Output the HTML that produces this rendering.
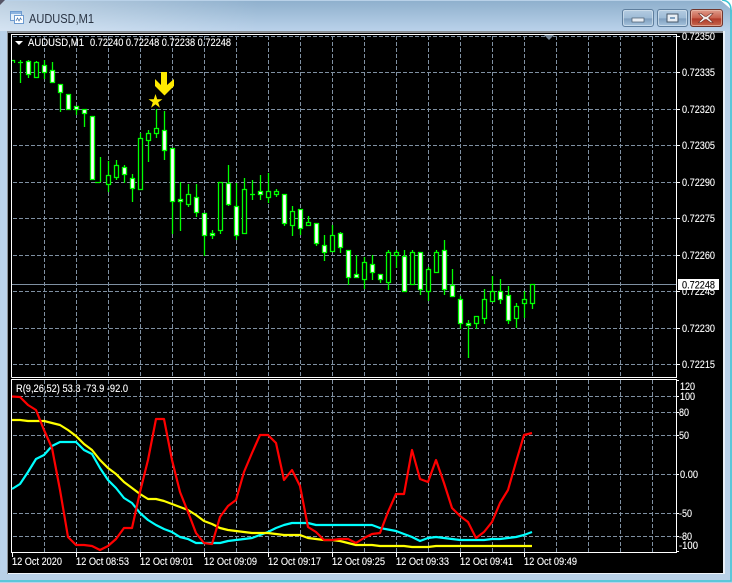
<!DOCTYPE html>
<html><head><meta charset="utf-8"><style>
html,body{margin:0;padding:0;background:#fff}
#w{position:relative;width:732px;height:583px;overflow:hidden;background:#b9d1e8}
svg{position:absolute;left:0;top:0}
text{font-family:"Liberation Sans",sans-serif;font-size:11px;fill:#fff;stroke:#fff;stroke-width:.12}
</style></head><body><div id="w">
<svg width="732" height="583" viewBox="0 0 732 583">
<defs>
<linearGradient id="t" x1="0" y1="0" x2="0" y2="1"><stop offset="0" stop-color="#8fb0cd"/><stop offset="1" stop-color="#bad2ea"/></linearGradient>
<linearGradient id="l" x1="0" y1="0" x2="1" y2="0"><stop offset="0" stop-color="#fff" stop-opacity=".4"/><stop offset="1" stop-color="#fff" stop-opacity="0"/></linearGradient>
<linearGradient id="b1" x1="0" y1="0" x2="0" y2="1"><stop offset="0" stop-color="#b6cde2"/><stop offset=".5" stop-color="#9dbbd6"/><stop offset=".55" stop-color="#7f9fbe"/><stop offset="1" stop-color="#a9c6e0"/></linearGradient>
<linearGradient id="b2" x1="0" y1="0" x2="0" y2="1"><stop offset="0" stop-color="#e0a090"/><stop offset=".5" stop-color="#c8604c"/><stop offset=".55" stop-color="#b03a28"/><stop offset="1" stop-color="#c86a50"/></linearGradient>
</defs>
<rect width="732" height="583" fill="#b9d1e8"/>
<rect x="0" y="1" width="732" height="30" fill="url(#t)"/>
<rect x="0" y="1" width="260" height="30" fill="url(#l)"/>
<path d="M0 0h5L0 5z" fill="#556"/>
<path d="M720 0h12v10z" fill="#fff"/>
<path d="M722 0Q731 1 731 10V581H0" fill="none" stroke="#3cc4d4" stroke-width="1.5"/>
<rect x="1" y="31" width="6" height="541" fill="#bad2ea"/>
<rect x="7" y="31" width="717" height="2" fill="#8a8f94"/>
<rect x="7" y="31" width="2" height="543" fill="#8a8f94"/>
<rect x="8" y="33" width="716" height="540" fill="#000"/>
<rect x="8" y="573" width="716" height="1" fill="#eef4fa"/>
<rect x="723" y="31" width="2" height="543" fill="#e8f0f8"/>

<!-- title -->
<g shape-rendering="crispEdges">
<rect x="10.5" y="11.5" width="11" height="9" fill="#e6f0fa" stroke="#6e9bd0"/>
<rect x="14.5" y="15.5" width="9" height="8" fill="#fff" stroke="#6e9bd0"/>
<rect x="11" y="12" width="10" height="2" fill="#8db4e0"/>
</g>
<path d="M16 21l1.500-3 1.500 3 1.500-3 1 2" fill="none" stroke="#4a78b0" stroke-width=".8"/>
<text x="29" y="23" textLength="65" lengthAdjust="spacingAndGlyphs" style="font-size:12.500px;fill:#2a3444;stroke:none">AUDUSD,M1</text>

<!-- buttons -->
<rect x="622.500" y="9.500" width="31" height="17" rx="2.500" fill="url(#b1)" stroke="#5f7f9e"/>
<rect x="623.500" y="10.500" width="29" height="15" rx="2" fill="none" stroke="#d6e4f0" stroke-opacity=".7"/>
<rect x="632" y="18" width="12" height="4" fill="#e8eef4" stroke="#47586a" stroke-width=".7"/>
<rect x="657.500" y="9.500" width="30" height="17" rx="2.500" fill="url(#b1)" stroke="#5f7f9e"/>
<rect x="658.500" y="10.500" width="28" height="15" rx="2" fill="none" stroke="#d6e4f0" stroke-opacity=".7"/>
<rect x="667" y="14" width="11" height="8" fill="#e8eef4" stroke="#47586a"/>
<rect x="670" y="17" width="5" height="2" fill="#7f9fbe"/>
<rect x="690.500" y="9.500" width="32" height="17" rx="2.500" fill="url(#b2)" stroke="#70362e"/>
<rect x="691.500" y="10.500" width="30" height="15" rx="2" fill="none" stroke="#f0c8b8" stroke-opacity=".6"/>
<path d="M701 13.500l4 3 1.500 0 4-3h2.500l-4.500 4.500 4.500 4.500h-2.500l-4-3h-1.500l-4 3h-2.500l4.500-4.500-4.500-4.500z" fill="#f4f0ee" stroke="#6a3028" stroke-width=".6"/>

<!-- grid -->
<g fill="none" stroke="#7f90a2" shape-rendering="crispEdges">
<path stroke-dasharray="4 2" d="M13 36.500H676M13 72.500H676M13 109.500H676M13 145.500H676M13 182.500H676M13 218.500H676M13 255.500H676M13 291.500H676M13 328.500H676M13 364.500H676"/>
<path stroke-dasharray="4 2" d="M44.500 36V377M76.500 36V377M108.500 36V377M140.500 36V377M172.500 36V377M204.500 36V377M236.500 36V377M268.500 36V377M300.500 36V377M332.500 36V377M364.500 36V377M396.500 36V377M428.500 36V377M460.500 36V377M492.500 36V377M524.500 36V377M556.500 36V377M588.500 36V377M620.500 36V377M652.500 36V377"/>
<path stroke-dasharray="4 2" d="M13 396.500H676M13 412.500H676M13 435.500H676M13 474.500H676M13 513.500H676M13 536.500H676"/>
<path stroke-dasharray="4 2" d="M44.500 380V552M76.500 380V552M108.500 380V552M140.500 380V552M172.500 380V552M204.500 380V552M236.500 380V552M268.500 380V552M300.500 380V552M332.500 380V552M364.500 380V552M396.500 380V552M428.500 380V552M460.500 380V552M492.500 380V552M524.500 380V552M556.500 380V552M588.500 380V552M620.500 380V552M652.500 380V552"/>
<path d="M12 284.500H676"/>
</g>
<path d="M544 35h10l-5 5z" fill="#778899"/>

<!-- frames -->
<g fill="none" stroke="#fff" shape-rendering="crispEdges">
<path d="M11.500 377.500V34.500H676.500V377.500H11.500"/>
<path d="M11.500 379.500H676.500V552.500H11.500z"/>
<path d="M677 36.500h3M677 72.500h3M677 109.500h3M677 145.500h3M677 182.500h3M677 218.500h3M677 255.500h3M677 291.500h3M677 328.500h3M677 364.500h3"/>
<path d="M677 380.500h2M677 396.500h2M677 412.500h2M677 435.500h2M677 474.500h2M677 513.500h2M677 536.500h2M677 551.500h2"/>
<path d="M12.500 553v4M76.500 553v4M140.500 553v4M204.500 553v4M268.500 553v4M332.500 553v4M396.500 553v4M460.500 553v4M524.500 553v4"/>
</g>

<!-- wicks -->
<g fill="none" stroke="#00ff00" stroke-width="1.300">
<path d="M12 60.500h3M14.500 60v3M18 62.500h5M100 182.500h-5M20.500 60V83M28.500 60V78M36.500 61V78M44.500 60V79M52.500 62V82M60.500 84V112M68.500 94V109M76.500 106V115M84.500 109V127M92.500 116V179M100.500 157V182M108.500 161V192M116.500 160V180M124.500 165V183M132.500 174V202M140.500 133V190M148.500 130V162M156.500 109V138M164.500 111V160M172.500 148V234M180.500 182V231M188.500 184V207M196.500 184V217M204.500 213V256M212.500 230V239M220.500 182V234M228.500 165V206M236.500 183V240M244.500 178V233M252.500 180V200M260.500 175V200M268.500 173V203M276.500 189V197M284.500 194V226M292.500 206V236M300.500 209V235M308.500 216V226M316.500 223V246M324.500 235V261M332.500 225V252M340.500 232V253M348.500 250V285M356.500 255V277M364.500 257V289M372.500 255V280M380.500 274V283M388.500 250V290M396.500 250V268M404.500 250V292M412.500 250V285M420.500 252V295M428.500 267V301M436.500 250V272M444.500 240V295M452.500 269V297M460.500 296V329M468.500 320V358M476.500 316V329M484.500 289V324M492.500 276V302M500.500 279V304M508.500 286V324M516.500 303V328M524.500 291V318M532.500 284V309"/>
<path d="M250 194.500h5"/>
<!-- hollow -->
<path fill="#000" d="M34.500 62.500h4v15h-4zM106.500 175.500h4v9h-4zM114.500 165.500h4v12h-4zM138.500 138.500h4v51h-4zM146.500 133.500h4v7h-4zM154.500 128.500h4v5h-4zM186.500 194.500h4v10h-4zM218.500 182.500h4v48h-4zM242.500 189.500h4v44h-4zM266.500 191.500h4v6h-4zM274.500 191.500h4v3h-4zM290.500 211.500h4v14h-4zM306.500 222.500h4v3h-4zM330.500 235.500h4v16h-4zM362.500 262.500h4v17h-4zM386.500 252.500h4v30h-4zM394.500 252.500h4v3h-4zM410.500 252.500h4v32h-4zM426.500 269.500h4v22h-4zM434.500 252.500h4v20h-4zM474.500 316.500h4v7h-4zM482.500 299.500h4v19h-4zM490.500 291.500h4v10h-4zM514.500 306.500h4v12h-4zM522.500 299.500h4v4h-4zM530.500 284.500h4v19h-4z"/>
<!-- filled -->
<path fill="#fff" d="M26.500 61.500h4v13h-4zM42.500 65.500h4v7h-4zM50.500 70.500h4v12h-4zM58.500 84.500h4v8h-4zM66.500 94.500h4v15h-4zM74.500 106.500h4v3h-4zM82.500 109.500h4v4h-4zM90.500 116.500h4v63h-4zM122.500 167.500h4v7h-4zM130.500 178.500h4v10h-4zM162.500 130.500h4v20h-4zM170.500 148.500h4v53h-4zM178.500 199.500h4v2h-4zM194.500 197.500h4v15h-4zM202.500 213.500h4v22h-4zM210.500 233.500h4v2h-4zM226.500 183.500h4v21h-4zM234.500 206.500h4v29h-4zM258.500 191.500h4v3h-4zM282.500 194.500h4v29h-4zM298.500 209.500h4v19h-4zM314.500 223.500h4v20h-4zM322.500 245.500h4v7h-4zM338.500 233.500h4v14h-4zM346.500 250.500h4v27h-4zM354.500 274.500h4v3h-4zM370.500 264.500h4v8h-4zM378.500 274.500h4v5h-4zM402.500 256.500h4v35h-4zM418.500 252.500h4v37h-4zM442.500 250.500h4v39h-4zM450.500 285.500h4v11h-4zM458.500 299.500h4v24h-4zM466.500 323.500h4v2h-4zM498.500 291.500h4v8h-4zM506.500 295.500h4v25h-4z"/>
</g>

<!-- arrow / star -->
<path d="M161 72h6v13l7-6v7l-9.500 9.500L155 86v-7l6 6z" fill="#ffea00"/>
<path d="M155.500 94l1.700 5.200h5.300l-4.300 3.200 1.700 5.300-4.400-3.300-4.400 3.300 1.700-5.300-4.300-3.200h5.300z" fill="#ffea00"/>

<!-- indicator lines -->
<g fill="none" stroke-width="2.200" stroke-linejoin="round">
<polyline stroke="#00ffff" points="12,489 20,484 28,472 36,459 44,455 52,446 60,442 68,442 76,442 84,450 92,454 100,468 108,480 116,488 124,498 132,503 140,513 148,520 156,525 164,529 172,532 180,537 188,539 196,543 204,543 212,543 220,543 228,541 236,540 244,539 252,538 260,535 268,532 276,528 284,525 292,523 300,523 308,523 316,525 324,525 332,525 340,525 348,525 356,525 364,525 372,525 380,528 388,529.500 396,531 404,534 412,537 420,541 428,538 436,537 444,538 452,539 460,540 468,540 476,540 484,540 492,539 500,539 508,538 516,537 524,535 532,532"/>
<polyline stroke="#ffff00" points="12,420 20,420 28,421 36,421 44,421 52,423 60,425 68,430 76,436 84,444 92,450 100,460 108,468 116,474 124,482 132,488 140,494 148,499 156,499 164,501 172,504 180,507 188,510 196,515 204,521 212,524 220,528 228,530 236,531 244,532 252,533 260,533 268,533 276,534 284,535 292,535 300,535 308,538 316,539 324,540 332,540 340,541 348,543 356,545 364,545 372,545 380,546 388,546 396,546 404,546 412,547 420,547 428,547 436,546 444,546 452,546 460,546 468,546 476,546 484,546 492,546 500,546 508,546 516,546 524,546 532,546"/>
<polyline stroke="#ff0000" points="12,396.500 20,397 28,405 36,410 44,430 52,448 60,490 68,537 76,545 84,545 92,546 100,550 108,546 116,539 124,528 132,528 140,492 148,460 156,419 164,419 172,460 180,492 188,512 196,533 204,543 212,544 220,517 228,506 236,500 244,472 252,453 260,435 268,435 276,443 284,480 292,470 300,486 308,527 316,532 324,540 332,540 340,539 348,539 356,543 364,538 372,534 380,533 388,512 396,494 404,494 412,450 420,479 428,482 436,460 444,483 452,508 460,516 468,522 476,538 484,532 492,522 500,503 508,490 516,462 524,435 532,433"/>
</g>

<!-- header labels -->
<path d="M15 41h8l-4 4z" fill="#fff"/>
<text x="28" y="46" textLength="56" lengthAdjust="spacingAndGlyphs">AUDUSD,M1</text>
<text x="90" y="46" textLength="141" lengthAdjust="spacingAndGlyphs">0.72240 0.72248 0.72238 0.72248</text>
<text x="16" y="392" textLength="112" lengthAdjust="spacingAndGlyphs">R(9,26,52) 53.3 -73.9 -92.0</text>

<!-- price labels -->
<text x="682" y="40" textLength="33" lengthAdjust="spacingAndGlyphs">0.72350</text>
<text x="682" y="76" textLength="33" lengthAdjust="spacingAndGlyphs">0.72335</text>
<text x="682" y="113" textLength="33" lengthAdjust="spacingAndGlyphs">0.72320</text>
<text x="682" y="149" textLength="33" lengthAdjust="spacingAndGlyphs">0.72305</text>
<text x="682" y="186" textLength="33" lengthAdjust="spacingAndGlyphs">0.72290</text>
<text x="682" y="222" textLength="33" lengthAdjust="spacingAndGlyphs">0.72275</text>
<text x="682" y="259" textLength="33" lengthAdjust="spacingAndGlyphs">0.72260</text>
<text x="682" y="295" textLength="33" lengthAdjust="spacingAndGlyphs">0.72245</text>
<text x="682" y="332" textLength="33" lengthAdjust="spacingAndGlyphs">0.72230</text>
<text x="682" y="368" textLength="33" lengthAdjust="spacingAndGlyphs">0.72215</text>
<rect x="678" y="279" width="41" height="11" fill="#fff"/>
<text x="682" y="288.500" textLength="33" lengthAdjust="spacingAndGlyphs" style="fill:#000;stroke:#000">0.72248</text>

<text x="680" y="390" textLength="15" lengthAdjust="spacingAndGlyphs">120</text>
<text x="680" y="400" textLength="15" lengthAdjust="spacingAndGlyphs">100</text>
<text x="679" y="416" textLength="10" lengthAdjust="spacingAndGlyphs">80</text>
<text x="679" y="439" textLength="10" lengthAdjust="spacingAndGlyphs">50</text>
<text x="680" y="478" textLength="18" lengthAdjust="spacingAndGlyphs">0.00</text>
<text x="679" y="517" textLength="13" lengthAdjust="spacingAndGlyphs">-50</text>
<text x="679" y="540" textLength="13" lengthAdjust="spacingAndGlyphs">-80</text>
<text x="679" y="549" textLength="19" lengthAdjust="spacingAndGlyphs">-100</text>

<!-- time labels -->
<text x="12" y="565" textLength="50" lengthAdjust="spacingAndGlyphs">12 Oct 2020</text>
<text x="76" y="565" textLength="53" lengthAdjust="spacingAndGlyphs">12 Oct 08:53</text>
<text x="140" y="565" textLength="53" lengthAdjust="spacingAndGlyphs">12 Oct 09:01</text>
<text x="204" y="565" textLength="53" lengthAdjust="spacingAndGlyphs">12 Oct 09:09</text>
<text x="268" y="565" textLength="53" lengthAdjust="spacingAndGlyphs">12 Oct 09:17</text>
<text x="332" y="565" textLength="53" lengthAdjust="spacingAndGlyphs">12 Oct 09:25</text>
<text x="396" y="565" textLength="53" lengthAdjust="spacingAndGlyphs">12 Oct 09:33</text>
<text x="460" y="565" textLength="53" lengthAdjust="spacingAndGlyphs">12 Oct 09:41</text>
<text x="524" y="565" textLength="53" lengthAdjust="spacingAndGlyphs">12 Oct 09:49</text>
</svg>
</div></body></html>
